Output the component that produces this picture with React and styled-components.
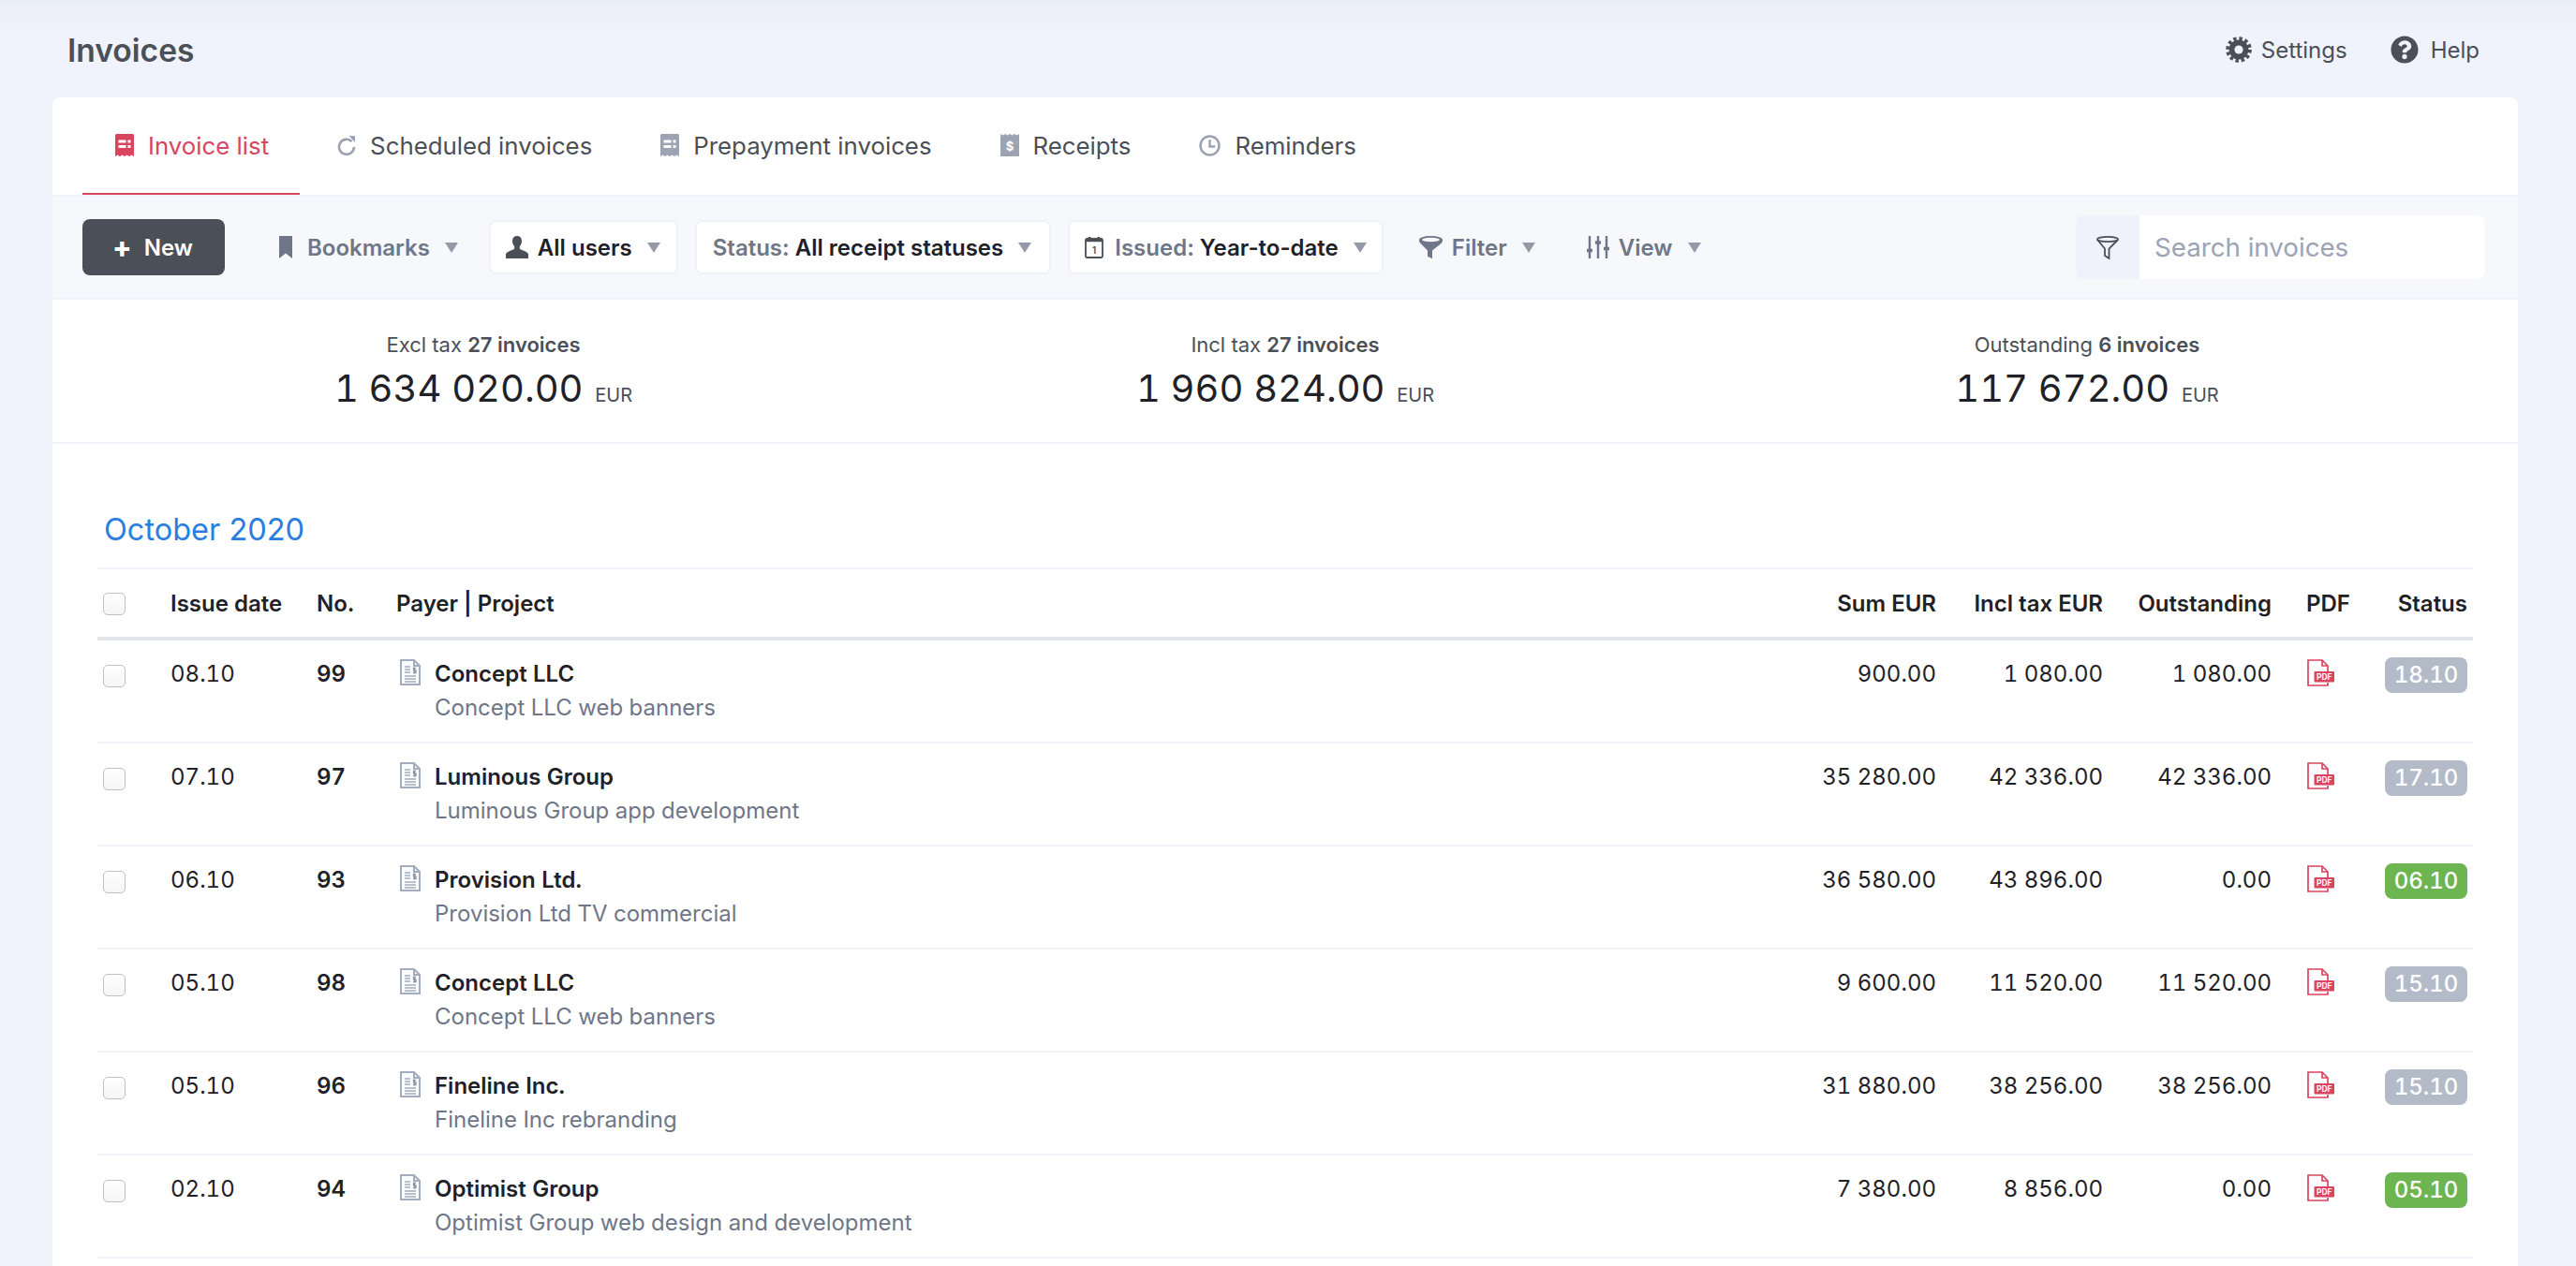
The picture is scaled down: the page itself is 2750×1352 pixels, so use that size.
import styled, { createGlobalStyle } from 'styled-components';
import { FaQuestionCircle } from 'react-icons/fa';

const rows = [
	{ date: '08.10', no: '99', payer: 'Concept LLC', project: 'Concept LLC web banners', sum: '900.00', incl: '1 080.00', out: '1 080.00', status: '18.10', paid: false },
	{ date: '07.10', no: '97', payer: 'Luminous Group', project: 'Luminous Group app development', sum: '35 280.00', incl: '42 336.00', out: '42 336.00', status: '17.10', paid: false },
	{ date: '06.10', no: '93', payer: 'Provision Ltd.', project: 'Provision Ltd TV commercial', sum: '36 580.00', incl: '43 896.00', out: '0.00', status: '06.10', paid: true },
	{ date: '05.10', no: '98', payer: 'Concept LLC', project: 'Concept LLC web banners', sum: '9 600.00', incl: '11 520.00', out: '11 520.00', status: '15.10', paid: false },
	{ date: '05.10', no: '96', payer: 'Fineline Inc.', project: 'Fineline Inc rebranding', sum: '31 880.00', incl: '38 256.00', out: '38 256.00', status: '15.10', paid: false },
	{ date: '02.10', no: '94', payer: 'Optimist Group', project: 'Optimist Group web design and development', sum: '7 380.00', incl: '8 856.00', out: '0.00', status: '05.10', paid: true },
];

const summary = [
	{ label: 'Excl tax', count: '27 invoices', value: '1 634 020.00' },
	{ label: 'Incl tax', count: '27 invoices', value: '1 960 824.00' },
	{ label: 'Outstanding', count: '6 invoices', value: '117 672.00' },
];

const ReceiptIcon = ({ color }) => (
	<svg width='20' height='24' viewBox='0 0 20 24'>
		<path fill={color} d='M0 1.5Q0 0 1.5 0h17Q20 0 20 1.5V24l-2.5-1.6L15 24l-2.5-1.6L10 24l-2.5-1.6L5 24l-2.5-1.6L0 24z' />
		<path fill='#fff' d='M3.5 6.5h8v3h-8zM13.5 6.5h3v3h-3zM3.5 12h8v3h-8zM13.5 12h3v3h-3z' />
	</svg>
);

const RefreshIcon = () => (
	<svg width='20' height='22' viewBox='0 0 20 22' fill='none'>
		<path stroke='#9aa1b0' strokeWidth='2.6' d='M15.5 7A8 8 0 1 0 18 13' />
		<path fill='#9aa1b0' d='M12.5 1 19 1.2V8z' />
	</svg>
);

const DollarReceiptIcon = () => (
	<svg width='20' height='24' viewBox='0 0 20 24'>
		<path fill='#9ca3b2' d='M0 0l2.5 1.6L5 0l2.5 1.6L10 0l2.5 1.6L15 0l2.5 1.6L20 0v24H0z' />
		<text x='10' y='17.5' textAnchor='middle' fontFamily='Inter, sans-serif' fontSize='13' fontWeight='700' fill='#fff'>$</text>
	</svg>
);

const ClockIcon = () => (
	<svg width='23' height='23' viewBox='0 0 24 24' fill='none' stroke='#9ca3b2' strokeWidth='2.6'>
		<circle cx='12' cy='12' r='10.4' />
		<path d='M12 5.5V13h6' />
	</svg>
);

const GearIcon = () => (
	<svg width='28' height='28' viewBox='0 0 28 28'>
		<circle cx='14' cy='14' r='10.5' fill='#4a4f58' />
		<circle cx='14' cy='14' r='11.8' fill='none' stroke='#4a4f58' strokeWidth='4' strokeDasharray='3.4 2.78' />
		<circle cx='14' cy='14' r='4.6' fill='#eff2fa' />
	</svg>
);

const BookmarkIcon = () => (
	<svg width='14' height='24' viewBox='0 0 14 24'>
		<path fill='#6f7687' d='M0 0h14v24l-7-5.5L0 24z' />
	</svg>
);

const UserIcon = () => (
	<svg width='24' height='24' viewBox='0 0 24 24'>
		<path fill='#4a4f58' d='M12 0c3.3 0 5 2.4 5 5.6 0 2.4-.9 4.4-2.2 5.7v2c0 1 3.300 2 6 3.200C22.900 17.300 24 18.300 24 20v4H0v-4c0-1.700 1.100-2.700 3.200-3.500 2.700-1.200 6-2.200 6-3.200v-2C7.900 10 7 8 7 5.600 7 2.400 8.700 0 12 0z' />
	</svg>
);

const CalendarIcon = () => (
	<svg width='20' height='24' viewBox='0 0 20 24'>
		<rect x='1' y='3' width='18' height='20' rx='1.5' fill='none' stroke='#4a4f58' strokeWidth='1.8' />
		<path fill='#4a4f58' d='M1 3h18v3.200H1zM4 1h2.500v3H4zM13.500 1H16v3h-2.500z' />
		<text x='10' y='19' textAnchor='middle' fontFamily='Inter, sans-serif' fontSize='10' fill='#4a4f58'>1</text>
	</svg>
);

const FunnelIcon = () => (
	<svg width='25' height='24' viewBox='0 0 25 24'>
		<path fill='#6f7687' d='M0 4c0 2 .6 3 1.500 4l7.500 7.500V22l5 2v-8.500L23.500 8C24.400 7 25 6 25 4z' />
		<ellipse cx='12.500' cy='4' rx='12.500' ry='4' fill='#6f7687' />
		<ellipse cx='12.500' cy='4' rx='9.500' ry='2.200' fill='#f7f8fc' />
	</svg>
);

const SlidersIcon = () => (
	<svg width='24' height='24' viewBox='0 0 24 24' fill='none' stroke='#6f7687' strokeWidth='2.4'>
		<path d='M3 0v24M12 0v24M21 0v24' />
		<path strokeWidth='3.400' d='M0 15.500h6M9 7h6M18 13.500h6' />
	</svg>
);

const SearchFunnelIcon = () => (
	<svg width='24' height='25' viewBox='0 0 24 25' fill='none' stroke='#4a4f58' strokeWidth='1.8'>
		<ellipse cx='12' cy='3.500' rx='11' ry='2.600' />
		<path d='M1 4 9 13.500V21l4.500 3V13.500L23 4' />
	</svg>
);

const DocIcon = () => (
	<svg width='22' height='28' viewBox='0 0 22 28' fill='none'>
		<path stroke='#a4adbf' strokeWidth='2' fill='#fbfcfe' d='M1 1h14l6 6v20H1z' />
		<path stroke='#a4adbf' strokeWidth='2' d='M15 1v6h6' />
		<path stroke='#a4adbf' strokeWidth='1.300' d='M5 8h6M5 11h6M5 14h6M5 18h12M5 21h12M5 24h12' />
		<path stroke='#8c95a8' strokeWidth='1.300' d='M17 9.500h-2.500v2.500H17v2.500h-3M15.500 8.500v7' />
	</svg>
);

const PdfIcon = () => (
	<svg width='29' height='29' viewBox='0 0 29 29' fill='none'>
		<path stroke='#d9455f' strokeWidth='1.700' d='M22 17v-10l-6-6H1v27h21v-3' />
		<path stroke='#d9455f' strokeWidth='1.700' d='M16 1v6h6' />
		<rect x='7.500' y='13' width='21.500' height='11.500' rx='1' fill='#d9455f' />
		<text x='18.200' y='22' textAnchor='middle' fontFamily='Inter, sans-serif' fontSize='8.500' fontWeight='700' fill='#fff'>PDF</text>
	</svg>
);

export default function App() {
	return (
		<Page>
			<GlobalStyle />
			<Header>
				<Title>Invoices</Title>
				<HeaderLinks>
					<HeaderLink>
						<GearIcon />
						Settings
					</HeaderLink>
					<HeaderLink $help>
						<FaQuestionCircle size={30} color='#4a4f58' />
						Help
					</HeaderLink>
				</HeaderLinks>
			</Header>
			<Card>
				<Tabs>
					<Tab $active>
						<ReceiptIcon color='#d9455f' />
						Invoice list
					</Tab>
					<Tab>
						<RefreshIcon />
						Scheduled invoices
					</Tab>
					<Tab>
						<ReceiptIcon color='#9ca3b2' />
						Prepayment invoices
					</Tab>
					<Tab>
						<DollarReceiptIcon />
						Receipts
					</Tab>
					<Tab>
						<ClockIcon />
						Reminders
					</Tab>
				</Tabs>
				<Toolbar>
					<NewButton>
						<span>+</span>
						New
					</NewButton>
					<Dropdown $iconGap='16px' $right='13px'>
						<BookmarkIcon />
						<Muted>Bookmarks</Muted>
						<Caret />
					</Dropdown>
					<Dropdown $boxed $right='17px'>
						<UserIcon />
						<Strong>All users</Strong>
						<Caret />
					</Dropdown>
					<Dropdown $boxed $left='17px' $right='19px'>
						<span>
							<Muted>Status:</Muted> <Strong>All receipt statuses</Strong>
						</span>
						<Caret />
					</Dropdown>
					<Dropdown $boxed $iconGap='12px'>
						<CalendarIcon />
						<span>
							<Muted>Issued:</Muted> <Strong>Year-to-date</Strong>
						</span>
						<Caret />
					</Dropdown>
					<Dropdown $right='15px'>
						<FunnelIcon />
						<Muted>Filter</Muted>
						<Caret />
					</Dropdown>
					<Dropdown>
						<SlidersIcon />
						<Muted>View</Muted>
						<Caret />
					</Dropdown>
					<Search>
						<SearchAddon>
							<SearchFunnelIcon />
						</SearchAddon>
						<SearchInput placeholder='Search invoices' />
					</Search>
				</Toolbar>
				<Summary>
					{summary.map(s => (
						<SummaryItem key={s.label}>
							<SummaryLabel>
								{s.label} <b>{s.count}</b>
							</SummaryLabel>
							<SummaryValue>
								{s.value} <small>EUR</small>
							</SummaryValue>
						</SummaryItem>
					))}
				</Summary>
				<Section>
					<Month>October 2020</Month>
					<HeadRow>
						<Cell>
							<Check $head />
						</Cell>
						<Cell>Issue date</Cell>
						<Cell>No.</Cell>
						<Cell>Payer | Project</Cell>
						<Amount>Sum EUR</Amount>
						<Amount>Incl tax EUR</Amount>
						<Amount>Outstanding</Amount>
						<PdfCell>PDF</PdfCell>
						<StatusCell>Status</StatusCell>
					</HeadRow>
					{rows.map(r => (
						<Row key={r.no}>
							<Cell>
								<Check />
							</Cell>
							<Cell>{r.date}</Cell>
							<Cell>
								<b>{r.no}</b>
							</Cell>
							<PayerCell>
								<DocIcon />
								<div>
									<PayerName>{r.payer}</PayerName>
									<ProjectName>{r.project}</ProjectName>
								</div>
							</PayerCell>
							<Amount>{r.sum}</Amount>
							<Amount>{r.incl}</Amount>
							<Amount>{r.out}</Amount>
							<PdfCell>
								<PdfIcon />
							</PdfCell>
							<StatusCell>
								<Badge $paid={r.paid}>{r.status}</Badge>
							</StatusCell>
						</Row>
					))}
				</Section>
			</Card>
		</Page>
	);
}

const GlobalStyle = createGlobalStyle`
	html, body {
		margin: 0;
		height: 100%;
		overflow: hidden;
	}
	body {
		background: linear-gradient(#e9edf6, #f0f3fb 34px);
		font-family: Inter, 'Noto Sans', sans-serif;
		color: #1f2126;
	}
	* {
		box-sizing: border-box;
	}
`;

const Page = styled.div`
	height: 100vh;
	display: flex;
	flex-direction: column;
	overflow: hidden;
`;

const Header = styled.header`
	height: 104px;
	flex: none;
	display: flex;
	align-items: center;
	justify-content: space-between;
	padding: 2px 103px 0 72px;
`;

const Title = styled.h1`
	margin: 0;
	font-size: 33.6px;
	font-weight: 600;
	color: #4a4f58;
`;

const HeaderLinks = styled.div`
	display: flex;
	gap: 46px;
`;

const HeaderLink = styled.a`
	display: flex;
	align-items: center;
	gap: ${p => (p.$help ? '13px' : '10px')};
	font-size: 24px;
	color: #4a4f58;
`;

const Card = styled.main`
	flex: 1;
	margin: 0 62px 0 56px;
	background: #fff;
	border-radius: 8px 8px 0 0;
`;

const Tabs = styled.nav`
	height: 104px;
	display: flex;
	gap: 5px;
	padding: 0 32px;
`;

const Tab = styled.a`
	display: flex;
	align-items: center;
	gap: 15px;
	padding: 0 33px 0 35px;
	font-size: 25.8px;
	color: ${p => (p.$active ? '#d9455f' : '#4a4f58')};
	border-bottom: 2px solid ${p => (p.$active ? '#d9455f' : 'transparent')};
`;

const Toolbar = styled.div`
	height: 112px;
	display: flex;
	align-items: center;
	gap: 18px;
	padding: 0 35px 0 32px;
	background: #f7f8fc;
	border-top: 2px solid #f0f2f9;
	border-bottom: 2px solid #f0f2f9;
`;

const NewButton = styled.button`
	width: 152px;
	height: 60px;
	margin-right: 20px;
	display: flex;
	align-items: center;
	justify-content: center;
	gap: 13px;
	padding: 0 2px 0 0;
	border: 0;
	border-radius: 8px;
	background: #4a4f58;
	color: #fff;
	font: 600 24px Inter, sans-serif;

	span {
		font-size: 30px;
		font-weight: 800;
		line-height: 1;
	}
`;

const Dropdown = styled.div`
	height: 58px;
	display: flex;
	align-items: center;
	gap: 10px;
	padding-left: ${p => p.$left || (p.$boxed ? '16px' : '18px')};
	padding-right: ${p => p.$right || (p.$boxed ? '16px' : '18px')};
	font-size: 24px;
	font-weight: 600;
	background: ${p => (p.$boxed ? '#fff' : 'transparent')};
	border: 2px solid ${p => (p.$boxed ? '#f0f2f9' : 'transparent')};
	border-radius: 8px;
	white-space: nowrap;

	svg {
		margin-right: ${p => (p.$iconGap ? `calc(${p.$iconGap} - 10px)` : '0')};
	}
`;

const Muted = styled.span`
	color: #6f7687;
`;

const Strong = styled.span`
	color: #1f2126;
`;

const Caret = styled.i`
	width: 0;
	height: 0;
	margin-left: 6px;
	border-left: 7.5px solid transparent;
	border-right: 7.5px solid transparent;
	border-top: 11px solid #949aa8;
`;

const Search = styled.div`
	width: 437px;
	height: 68px;
	margin-left: auto;
	display: flex;
	background: #fff;
	border-radius: 8px;
	overflow: hidden;
`;

const SearchAddon = styled.div`
	width: 68px;
	flex: none;
	display: flex;
	align-items: center;
	justify-content: center;
	background: #eff2fa;
`;

const SearchInput = styled.input`
	flex: 1;
	min-width: 0;
	padding: 0 16px;
	border: 0;
	outline: 0;
	background: transparent;
	font: 400 27.7px Inter, sans-serif;

	&::placeholder {
		color: #9ca3b4;
		opacity: 1;
	}
`;

const Summary = styled.div`
	height: 154px;
	display: grid;
	grid-template-columns: repeat(3, 1fr);
	padding: 32px 32px 0;
	border-bottom: 2px solid #f0f2f9;
`;

const SummaryItem = styled.div`
	text-align: center;
`;

const SummaryLabel = styled.div`
	font-size: 22px;
	line-height: 32px;
	color: #4a4f58;

	b {
		font-weight: 600;
	}
`;

const SummaryValue = styled.div`
	margin-top: 3px;
	font-size: 40px;
	line-height: 56px;
	color: #1f2126;
	font-variant-numeric: tabular-nums;

	small {
		margin-left: 2px;
		font-size: 20px;
		color: #4a4f58;
	}
`;

const Section = styled.section`
	padding: 70px 48px 0;
`;

const Month = styled.h2`
	margin: 0 0 20px 7px;
	padding-top: 2px;
	font-size: 32.5px;
	line-height: 40px;
	font-weight: 400;
	color: #2a7de1;
`;

const columns = '78px 156px 85px 1fr 200px 178px 180px 105px 110px';

const HeadRow = styled.div`
	display: grid;
	grid-template-columns: ${columns};
	align-items: center;
	height: 78px;
	font-size: 24px;
	font-weight: 600;
	border-top: 2px solid #f0f2f9;
	border-bottom: 4px solid #e2e5ec;
`;

const Row = styled.div`
	display: grid;
	grid-template-columns: ${columns};
	height: 110px;
	padding-top: 21px;
	font-size: 24px;
	line-height: 30px;
	border-bottom: 2px solid #f0f2f7;
	font-variant-numeric: tabular-nums;

	b {
		font-weight: 600;
	}
`;

const Cell = styled.div`
	min-width: 0;
`;

const Amount = styled(Cell)`
	text-align: right;
`;

const PdfCell = styled(Cell)`
	padding-left: 37px;

	svg {
		margin: -1px 0 0 1px;
	}
`;

const StatusCell = styled(Cell)`
	text-align: right;
	padding-right: 6px;
`;

const PayerCell = styled(Cell)`
	display: flex;
	gap: 15px;
	padding-left: 4px;

	svg {
		margin-top: -1px;
	}
`;

const PayerName = styled.div`
	font-weight: 600;
`;

const ProjectName = styled.div`
	margin-top: 6px;
	color: #6f7687;
`;

const Check = styled.span`
	display: block;
	width: 24px;
	height: 24px;
	margin: ${p => (p.$head ? '2px 0 0 6px' : '5px 0 0 6px')};
	border: 1.5px solid #bfc0c4;
	border-radius: 5px;
	background: linear-gradient(#fff, #f5f5f5);
`;

const Badge = styled.span`
	display: inline-block;
	width: 88px;
	height: 38px;
	margin-top: -3px;
	border-radius: 8px;
	background: ${p => (p.$paid ? '#6db550' : '#b3bac8')};
	color: #fff;
	font-weight: 500;
	line-height: 38px;
	text-align: center;
	vertical-align: top;
`;
